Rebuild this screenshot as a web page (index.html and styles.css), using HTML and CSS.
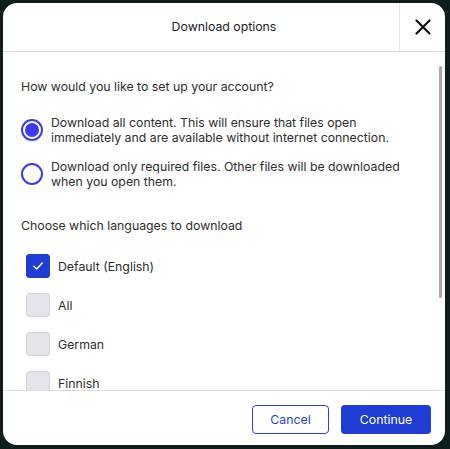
FILE: index.html
```html
<!DOCTYPE html>
<html lang="en">
<head>
    <meta charset="UTF-8">
    <meta name="viewport" content="width=device-width, initial-scale=1.0">
    <title>Download options</title>
    <link rel="stylesheet" href="styles.css">
</head>
<body>
    <div class="dialog">
        <div class="dialog-header">
            <span></span>
            <h1>Download options</h1>
            <button class="close-btn" aria-label="Close">
                <svg width="16" height="16" viewBox="0 0 16 16">
                    <path d="M1.5 1.5 L14.5 14.5 M14.5 1.5 L1.5 14.5" stroke="#111" stroke-width="2.2" stroke-linecap="round" fill="none"/>
                </svg>
            </button>
        </div>

        <div class="dialog-content">
            <div class="dialog-body">
                <p class="question">How would you like to set up your account?</p>

                <div class="radio-group">
                    <label class="radio-row">
                        <span class="radio checked"></span>
                        <span>Download all content. This will ensure that files open<br>immediately and are available without internet connection.</span>
                    </label>
                    <label class="radio-row">
                        <span class="radio"></span>
                        <span>Download only required files. Other files will be downloaded<br>when you open them.</span>
                    </label>
                </div>

                <p class="question languages">Choose which languages to download</p>

                <div class="check-list">
                    <label class="check-row">
                        <span class="checkbox checked">
                            <svg width="14" height="14" viewBox="0 0 14 14">
                                <path d="M2.8 7.3 L5.7 10 L11.2 4" stroke="#fff" stroke-width="1.5" stroke-linecap="round" stroke-linejoin="round" fill="none"/>
                            </svg>
                        </span>
                        Default (English)
                    </label>
                    <label class="check-row"><span class="checkbox"></span>All</label>
                    <label class="check-row"><span class="checkbox"></span>German</label>
                    <label class="check-row"><span class="checkbox"></span>Finnish</label>
                </div>
            </div>
            <div class="scroll-thumb"></div>
        </div>

        <div class="dialog-footer">
            <button class="btn btn-secondary">Cancel</button>
            <button class="btn btn-primary">Continue</button>
        </div>
    </div>
</body>
</html>
```

FILE: styles.css
```css
html, body {
    margin: 0;
    padding: 0;
}

body {
    font-family: Inter, "Noto Sans", sans-serif;
    background-color: #0f1c1c;
    width: 450px;
    height: 449px;
    overflow: hidden;
}

.dialog {
    margin: 3px 0 0 3px;
    width: 442px;
    height: 442px;
    background-color: #fff;
    border-radius: 14px;
    overflow: hidden;
    display: flex;
    flex-direction: column;
}

.dialog-header {
    display: grid;
    grid-template-columns: 46px 1fr 46px;
    height: 48px;
    border-bottom: 1px solid #dedede;
    flex-shrink: 0;
}

.dialog-header h1 {
    margin: 0;
    font-size: 12.3px;
    font-weight: 400;
    color: #222;
    text-align: center;
    line-height: 48px;
}

.close-btn {
    border: none;
    border-left: 1px solid #e6e6e6;
    background: none;
    padding: 0;
    display: flex;
    align-items: center;
    justify-content: center;
    cursor: pointer;
}

.dialog-content {
    flex: 1;
    position: relative;
    overflow: hidden;
}

.dialog-body {
    padding: 25px 18px 28px 18px;
    color: #2e2e2e;
    font-size: 12.3px;
}

/* scrollbar thumb drawn over the content */
.scroll-thumb {
    position: absolute;
    top: 14px;
    right: 3px;
    width: 3px;
    height: 232px;
    border-radius: 2px;
    background-color: #a6a6a6;
}

.question {
    margin: 0;
    line-height: 20px;
}

.radio-group {
    display: flex;
    flex-direction: column;
    gap: 14px;
    margin-top: 18px;
}

.radio-row {
    display: flex;
    align-items: center;
    gap: 8px;
    line-height: 15px;
}

.radio {
    width: 22px;
    height: 22px;
    border: 2px solid #3b3bf2;
    border-radius: 50%;
    box-sizing: border-box;
    flex-shrink: 0;
    display: flex;
    align-items: center;
    justify-content: center;
}

.radio.checked::after {
    content: "";
    width: 14px;
    height: 14px;
    border-radius: 50%;
    background-color: #3b3bf2;
}

.languages {
    margin-top: 27px;
}

.check-list {
    display: flex;
    flex-direction: column;
    gap: 15px;
    margin-top: 18px;
    padding-left: 5px;
}

.check-row {
    display: flex;
    align-items: center;
    gap: 8px;
    height: 24px;
}

.checkbox {
    width: 24px;
    height: 24px;
    box-sizing: border-box;
    border-radius: 3px;
    background-color: #e4e4ea;
    border: 1px solid #d3d3da;
    display: flex;
    align-items: center;
    justify-content: center;
}

.checkbox.checked {
    background-color: #1f3dd3;
    border-color: #1f3dd3;
}

.dialog-footer {
    flex-shrink: 0;
    height: 55px;
    border-top: 1px solid #dedede;
    box-sizing: border-box;
    display: flex;
    justify-content: flex-end;
    align-items: flex-start;
    gap: 12px;
    padding: 14px 14px 0 0;
}

.btn {
    font-family: Inter, "Noto Sans", sans-serif;
    font-size: 12.3px;
    height: 29px;
    border-radius: 4px;
    cursor: pointer;
    padding: 0;
}

.btn-secondary {
    width: 77px;
    background-color: #fff;
    color: #2a44d0;
    border: 1px solid #2a44d0;
}

.btn-primary {
    width: 90px;
    background-color: #1f3dd3;
    color: #fff;
    border: none;
}
```
